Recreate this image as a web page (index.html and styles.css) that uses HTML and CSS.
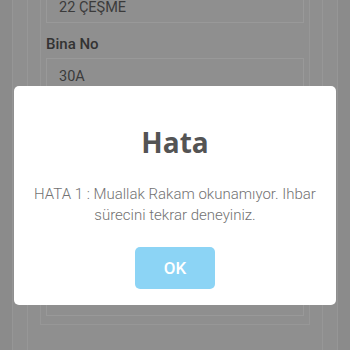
FILE: index.html
```html
<!DOCTYPE html>
<html lang="tr">
<head>
<meta charset="utf-8">
<link rel="stylesheet" href="styles.css">
</head>
<body>
<div class="bg">
  <div class="frame">
    <div class="panel">
      <div class="inner">
        <div class="field field-top"><span class="val">22 ÇEŞME</span></div>
        <div class="label">Bina No</div>
        <div class="field field-open"><span class="val">30A</span></div>
      </div>
    </div>
  </div>
  <div class="modal">
    <h2 class="title">Hata</h2>
    <p class="msg">HATA 1 : Muallak Rakam okunamıyor. Ihbar<br>sürecini tekrar deneyiniz.</p>
    <button class="ok">OK</button>
  </div>
</div>
</body>
</html>
```
FILE: styles.css
```css
html, body {
  margin: 0;
  padding: 0;
}
body {
  width: 350px;
  height: 350px;
  overflow: hidden;
  font-family: Roboto, "Liberation Sans", sans-serif;
}
.bg {
  position: relative;
  width: 350px;
  height: 350px;
  background: #8b8b8b;
  padding: 0 12px;
  box-sizing: border-box;
  display: flex;
}
.frame {
  flex: 1;
  background: #8f8f8f;
  border-left: 1px solid #969696;
  border-right: 1px solid #969696;
  padding: 0 14px;
  display: flex;
}
.panel {
  flex: 1;
  border-left: 1px solid #979797;
  border-right: 1px solid #979797;
  padding: 0 12px;
  display: flex;
  align-items: flex-start;
}
.inner {
  flex: 1;
  height: 325px;
  box-sizing: border-box;
  border: 1px solid #979797;
  border-top: none;
  padding: 0 5px;
  display: flex;
  flex-direction: column;
}
.field {
  border: 1px solid #999;
  box-sizing: border-box;
}
.field-top {
  height: 23px;
  border-top: none;
  padding: 0 0 0 12px;
  display: flex;
  align-items: flex-start;
}
.field-top .val {
  line-height: 16px;
}
.val {
  font-size: 14.5px;
  color: #3b3b3b;
}
.label {
  font-size: 15px;
  font-weight: 500;
  color: #333;
  margin-top: 12px;
  line-height: 18px;
  height: 23px;
}
.field-open {
  height: 258px;
  padding: 9px 0 0 12px;
  line-height: 16px;
}
.modal {
  position: absolute;
  left: 14px;
  top: 86px;
  width: 322px;
  height: 219px;
  box-sizing: border-box;
  background: #fff;
  border-radius: 5px;
  padding: 38px 10px 0;
  display: flex;
  flex-direction: column;
  align-items: center;
}
.title {
  margin: 0;
  font-family: "Open Sans", "Liberation Sans", sans-serif;
  font-weight: 700;
  font-size: 28px;
  line-height: 36px;
  color: #545454;
}
.msg {
  margin: 24px 0 0;
  font-size: 15px;
  line-height: 21px;
  color: #727272;
  text-align: center;
  font-weight: 300;
}
.ok {
  margin-top: 21px;
  width: 80px;
  height: 42px;
  border: none;
  border-radius: 5px;
  background: #8cd4f5;
  color: #fff;
  font-family: Roboto, "Liberation Sans", sans-serif;
  font-size: 17px;
  font-weight: 500;
  padding: 0;
}
```
